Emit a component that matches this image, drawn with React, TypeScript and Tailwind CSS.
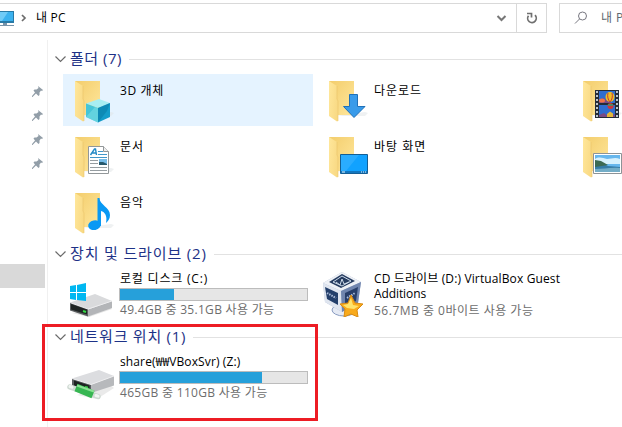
import React from 'react';

function FolderIcon({ children }: { children?: React.ReactNode }) {
  return (
    <svg className="ml-2 mt-1 h-12 w-12 shrink-0" viewBox="0 0 48 48">
      <defs>
        <linearGradient id="folderBack" x1="0" y1="0" x2="1" y2="1">
          <stop offset="0" stopColor="#f3cd6c" />
          <stop offset="1" stopColor="#ffe79c" />
        </linearGradient>
        <linearGradient id="folderFront" x1="0" y1="0" x2="1" y2="0.4">
          <stop offset="0" stopColor="#ffe79b" />
          <stop offset="1" stopColor="#f9da85" />
        </linearGradient>
      </defs>
      <path d="M11 38h29l3-3-3-1z" fill="#dfe3e6" opacity=".5" />
      <path d="M4 3h25v34H12z" fill="url(#folderBack)" />
      <path d="M4 3l8 5v13l1 2v20l-1 .5L4 38z" fill="url(#folderFront)" />
      <path d="M12 8v13l1 2v20" fill="none" stroke="#eac469" strokeWidth=".6" />
      {children}
    </svg>
  );
}

const Cube = () => (
  <g>
    <path d="M28 21l11 4-12 5-12-4.500z" fill="#a8eef2" />
    <path d="M15 25.500L27 30v14.500L15 39z" fill="#45c5d8" />
    <path d="M27 30l12-5v14l-12 5.500z" fill="#149cc9" />
    <path d="M15 39l9-10 3 1v14.500z" fill="#7adfe6" opacity=".55" />
    <path d="M27 30l12-5-3 8-9 11.500z" fill="#087ea9" opacity=".6" />
  </g>
);

const DocumentMark = () => (
  <g>
    <path d="M17.500 12.500h15l5 5v22h-20z" fill="#fff" stroke="#929799" />
    <path d="M32.500 12.500v5h5" fill="#eee" stroke="#929799" />
    <path d="M19.500 21l4-6h1l1 6M21 19h4" fill="none" stroke="#258ac6" strokeWidth="1.400" />
    <path d="M27 17.500h5M27 20.500h9M19 23.500h17" stroke="#4297c9" />
    <path d="M19 26.500h8M19 29.500h8M19 33.500h17M19 36.500h17" stroke="#969da1" />
    <path d="M28 25h8v6h-8z" fill="#78bde8" />
    <path d="M28 28l4 0 4 2v1h-8z" fill="#28596c" />
  </g>
);

const MusicMark = () => (
  <g fill="#0999f4">
    <ellipse cx="23.500" cy="35.200" rx="6.400" ry="4.800" transform="rotate(-12 23.500 35.200)" />
    <path d="M26.500 8h2c0 7 10.500 9 10.500 17 0 4-2 6-4 8 1.500-7-1-11-5-12v15h-3.500z" />
  </g>
);

const DownloadMark = () => (
  <path d="M24.500 16.500h8v12h7.500L29 39.500 18.500 28.500h6z" fill="#399bea" stroke="#2071b9" />
);

const DesktopMark = () => (
  <g>
    <path d="M15.500 20.500h27v19h-27z" fill="#11a2ff" stroke="#155e94" />
    <path d="M16 21h18L21 37h-5z" fill="#35b1ff" opacity=".7" />
    <path d="M16 37h26v2H16z" fill="#1376be" />
    <path d="M17 38h3M36 38h1M38 38h1M40 38h1" stroke="#e8f8ff" />
  </g>
);

const VideoMark = () => (
  <g>
    <path d="M16 12h24v28H16z" fill="#252c37" />
    <path d="M20 13h16v12H20zM20 27h16v12H20z" fill="#2f6dd0" />
    <path d="M18 13v27M38 13v27" stroke="#bdc5cc" strokeWidth="2" strokeDasharray="2 2" />
    <path d="M20 22l4-2 5 3 3 2H20zM20 37l5-2 4 3 7-2v3H20z" fill="#7b4b85" />
    <ellipse cx="31" cy="19" rx="4.500" ry="5" fill="#efbd24" />
    <path d="M29 15c-1 3 0 7 2 9M33 15c1 3 0 7-2 9" fill="none" stroke="#c0393c" />
    <ellipse cx="31.500" cy="28" rx="3" ry="3" fill="#cf343b" />
    <path d="M29 27h5" stroke="#29a374" strokeWidth="1.500" />
    <ellipse cx="23" cy="22.500" rx="3" ry="2" fill="#ef744a" />
    <path d="M28 39v-3l3-2.500 3 2V39z" fill="#e6b839" />
  </g>
);

const PictureMark = () => (
  <g>
    <path d="M14.500 19.500h28v20h-28z" fill="#fff" stroke="#8d9397" />
    <path d="M16 21h25v17H16z" fill="#67b7ed" />
    <path d="M16 25c4-3 8-1 12 0 4 0 8-2 13 0v5H16z" fill="#d7f1fd" />
    <path d="M16 27l5 1 8 4 12 1v5H16z" fill="#347ba6" />
    <path d="M16 26l6 1 7 4-13 2z" fill="#3c6a53" />
    <path d="M16 35c9 0 15-2 25-1v4H16z" fill="#73adc7" />
  </g>
);

interface FolderProps {
  name?: string;
  tracking?: string;
  children: React.ReactNode;
  selected?: boolean;
}

function Folder({ name, tracking = 'tracking-[1px]', children, selected = false }: FolderProps) {
  return (
    <div className={`flex h-[52px] w-[250px] shrink-0 ${selected ? 'bg-[#e5f3ff]' : ''}`}>
      <FolderIcon>{children}</FolderIcon>
      {name && <span className={`ml-px pt-[9px] leading-4 text-black ${tracking}`}>{name}</span>}
    </div>
  );
}

function GroupHeader({ title, tracking }: { title: string; tracking: string }) {
  return (
    <div className="flex h-[30px] items-center pl-[7px]">
      <svg className="h-3 w-3 shrink-0" viewBox="0 0 12 12" fill="none" stroke="#6b6b6b" strokeWidth="1.200">
        <path d="M.5 3.500L5.500 8.500l5-5" />
      </svg>
      <h2 className={`ml-[3px] pb-[2px] text-[15px] leading-[18px] text-[#1e3287] ${tracking}`}>{title}</h2>
      <div className="ml-[7px] h-px grow bg-[#e2e2e2]" />
    </div>
  );
}

function LocalDriveIcon() {
  return (
    <svg className="absolute left-[6px] top-[10px] h-10 w-11" viewBox="0 0 44 40">
      <path d="M3 34l17 4 23-8-3-3z" fill="#d9d9d9" opacity=".7" />
      <path d="M1 23.500L26 15l17 7-24 8.500z" fill="#d9dadc" />
      <path d="M19 30.500L43 22v7l-24 8.500z" fill="#b3b5b8" />
      <path d="M1 23.500l18 6.500v7.500L1 31.500z" fill="#5a5d5f" />
      <path d="M2 25l16 5.500v5L2 30.500z" fill="#1f2423" />
      <path d="M1 23.500l18 6.500 24-8" fill="none" stroke="#ececee" />
      <path d="M14 32l3 1" stroke="#35da45" strokeWidth="2" />
      <path d="M1 7l6-1v7H1zM8 6l9-2v9H8zM1 14h6v7l-6-1zM8 14h9v8l-9-1z" fill="#00b7f1" />
    </svg>
  );
}

function NetworkDriveIcon() {
  return (
    <svg className="absolute left-[4px] top-[13px] h-9 w-12" viewBox="0 0 48 36">
      <path d="M10 30l20 4 17-11-4-3z" fill="#dcdcdc" opacity=".6" />
      <path d="M5 13.500L32 5l15 6-23 8.500z" fill="#dcdde0" />
      <path d="M24 19.500L47 11v9.500L24 28z" fill="#b7b9bc" />
      <path d="M5 13.500l19 6V28L5 22z" fill="#5a5d60" />
      <path d="M7 15.500l15.500 5v5L7 20.500z" fill="#1d2221" />
      <path d="M5 13.500l19 6L47 11" fill="none" stroke="#eeeef0" />
      <path d="M18 22l3 .8" stroke="#35da45" strokeWidth="2" />
      <path d="M3 22l28 9.500" stroke="#ced9d2" strokeWidth="5.500" strokeLinecap="round" />
      <path d="M9 22.500l17 7" stroke="#37b652" strokeWidth="8" />
      <path d="M10 20.500l17 6" stroke="#8be294" strokeWidth="2" />
      <path d="M3 21.500l2 .7M29 30.500l2 .7" stroke="#f1f5f2" strokeWidth="3" strokeLinecap="round" />
    </svg>
  );
}

function VirtualBoxIcon() {
  return (
    <svg className="absolute left-[5px] top-0 h-12 w-[42px]" viewBox="0 0 42 48">
      <ellipse cx="22" cy="41" rx="12" ry="6" fill="#e5eaf4" stroke="#889bc0" />
      <path d="M1 14L20 3l19 10-3 21-16 9L3 33z" fill="#b1bdd5" />
      <path d="M1 14L20 3l19 10-20 9z" fill="#eef1f6" />
      <path d="M1 14l18 8 1 21L3 33z" fill="#dfe5ef" />
      <path d="M19 22l20-9-3 21-16 9z" fill="#7085ae" />
      <path d="M7 13l13-8 13 7-14 7z" fill="#263c60" />
      <path d="M3 18l13 6v12L5 30z" fill="#233f6b" />
      <path d="M23 24l13-6-2 14-11 6z" fill="#283e69" />
      <path d="M14 13l4 3 2-6 2 5 5-2M11 13l9-6 9 5-9 5z" fill="none" stroke="#ccd9e8" strokeWidth="1" />
      <path d="M5 24l9 5M25 29l8-5" stroke="#adbddb" strokeWidth="2" strokeDasharray="1.500 1" />
      <path d="M29 26l4 8 8 1-6 6 1 7-7-3-7 3 1-8-5-5 8-1z" fill="#f8aa1c" stroke="#d98b13" />
      <path d="M29 29l2 7 6 1-5 3-7-1-4-3 5-1z" fill="#ffe36d" />
    </svg>
  );
}

function UsageBar({ used }: { used: number }) {
  return (
    <div className="h-[13px] w-[189px] border border-[#bcbcbc] bg-[#e6e6e6]">
      <div className="h-full bg-[#26a0da]" style={{ width: used }} />
    </div>
  );
}

interface DriveProps {
  icon: React.ReactNode;
  name: React.ReactNode;
  nameTracking?: string;
  detail: string;
  used?: number;
  detailTracking: string;
}

function Drive({ icon, name, nameTracking = '', detail, used, detailTracking }: DriveProps) {
  return (
    <div className="relative h-[53px] w-[250px] shrink-0 pl-14 pt-[2px]">
      {icon}
      <div className={`whitespace-nowrap pb-px pl-px leading-4 text-black ${nameTracking}`}>{name}</div>
      {used !== undefined && <UsageBar used={used} />}
      <div className={`whitespace-nowrap pl-px pt-px leading-4 text-[#6d6d6d] ${detailTracking}`}>{detail}</div>
    </div>
  );
}

function Pin() {
  return (
    <svg className="h-[11px] w-[11px]" viewBox="0 0 11 11" fill="#929ea8">
      <path d="M6 0l5 4-1 1-1-.5L7.500 6.500v2.500L6.500 10 4 7.500.5 11H0v-1l3-3.500L1.500 4.500l1-1H4.500L6.500 2z" />
    </svg>
  );
}

export default function App() {
  return (
    <div className="relative flex h-[427px] w-[622px] flex-col overflow-hidden bg-white font-['Open_Sans','Noto_Sans_CJK_KR',sans-serif] text-[12px]">
      <header className="flex h-[33px] shrink-0 pt-[3px]">
        <div className="flex h-[30px] w-[547px] shrink-0 items-center border-y border-r border-[#d9d9d9]">
          <svg className="h-[18px] w-[15px] shrink-0" viewBox="0 0 15 18">
            <path d="M-2 2h16v12H-2z" fill="#287aa6" />
            <path d="M-2 3h15v9H-2z" fill="#3bb2ef" />
            <path d="M-2 3H8L2 12h-4z" fill="#6fcbf7" />
            <path d="M3 14h4v2h7v1H0v-1h3z" fill="#7894aa" />
          </svg>
          <svg className="ml-[5px] h-2 w-[7px]" viewBox="0 0 7 8" fill="none" stroke="#6c6c6c" strokeWidth="1.700">
            <path d="M2 1l3 3-3 3" />
          </svg>
          <span className="ml-[9px] leading-4 tracking-[0.2px]">내 PC</span>
          <svg className="ml-auto mr-[9px] h-[10px] w-[11px]" viewBox="0 0 11 10" fill="none" stroke="#777" strokeWidth="2">
            <path d="M1.500 3l4 4 4-4" />
          </svg>
          <div className="flex h-full w-[30px] items-center justify-center border-l border-[#d9d9d9]">
            <svg className="h-3 w-3" viewBox="0 0 12 12" fill="none" stroke="#707070" strokeWidth="1.700">
              <path d="M9 3.200A4.300 4.300 0 1 1 2.500 3.700M1 1.500h4.500v4" />
            </svg>
          </div>
        </div>
        <div className="ml-3 flex h-[30px] w-20 shrink-0 items-center whitespace-nowrap border border-[#d9d9d9] pl-[14px] text-[#60676e]">
          <svg className="h-[14px] w-[14px] shrink-0" viewBox="0 0 14 14" fill="none" stroke="#777780">
            <circle cx="8.500" cy="5" r="4" />
            <path d="M5.500 8L1 12.500" />
          </svg>
          <span className="ml-[13px] leading-4 tracking-[0.4px]">내 PC</span>
        </div>
      </header>

      <div className="flex min-h-0 grow">
        <aside className="flex w-[47px] shrink-0 flex-col pt-[53px]">
          <div className="flex flex-col gap-[13px] pl-8">
            <Pin />
            <Pin />
            <Pin />
            <Pin />
          </div>
          <div className="mt-[95px] h-6 w-[45px] bg-[#d9d9d9]" />
        </aside>
        <main className="mt-[7px] min-w-0 grow border-l border-[#f0f0f0] pt-1">
          <section>
            <GroupHeader title="폴더 (7)" tracking="tracking-[0.5px]" />
            <div className="grid grid-cols-[repeat(3,250px)] gap-1 pl-[15px]">
              <Folder name="3D 개체" tracking="tracking-[0.6px]" selected><Cube /></Folder>
              <Folder name="다운로드"><DownloadMark /></Folder>
              <Folder><VideoMark /></Folder>
              <Folder name="문서"><DocumentMark /></Folder>
              <Folder name="바탕 화면"><DesktopMark /></Folder>
              <Folder><PictureMark /></Folder>
              <Folder name="음악"><MusicMark /></Folder>
            </div>
          </section>
          <section className="mt-px">
            <GroupHeader title="장치 및 드라이브 (2)" tracking="tracking-[0.85px]" />
            <div className="flex gap-1 pl-[15px]">
              <Drive icon={<LocalDriveIcon />} name="로컬 디스크 (C:)" nameTracking="tracking-[0.8px]" detail="49.4GB 중 35.1GB 사용 가능" used={54} detailTracking="tracking-[0.3px]" />
              <Drive
                icon={<VirtualBoxIcon />}
                name={
                  <>
                    <div className="leading-[15px] tracking-[0.13px]">CD 드라이브 (D:) VirtualBox Guest</div>
                    <div className="leading-[15px] tracking-[-0.1px]">Additions</div>
                  </>
                }
                detail="56.7MB 중 0바이트 사용 가능"
                detailTracking="tracking-[0.5px]"
              />
            </div>
          </section>
          <section>
            <GroupHeader title="네트워크 위치 (1)" tracking="tracking-[0.75px]" />
            <div className="pl-[15px]">
              <Drive icon={<NetworkDriveIcon />} name="share(₩₩VBoxSvr) (Z:)" nameTracking="tracking-[0.12px]" detail="465GB 중 110GB 사용 가능" used={142} detailTracking="tracking-[0.3px]" />
            </div>
          </section>
        </main>
      </div>
      <div className="pointer-events-none absolute left-[42px] top-[324px] h-[97px] w-[276px] border-[3px] border-[#ed1c24]" />
    </div>
  );
}
